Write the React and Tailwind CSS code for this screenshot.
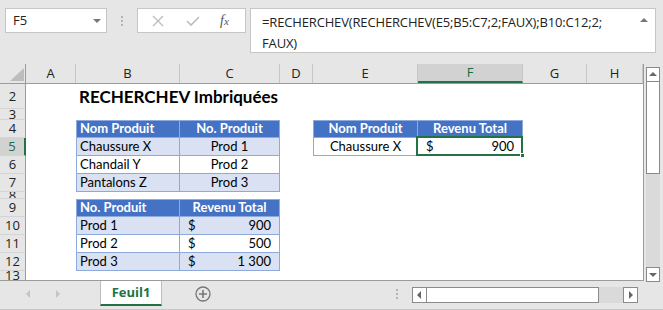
import React from "react";

const COLS = ["w-[50px]", "w-[104px]", "w-[100px]", "w-[33px]", "w-[105px]", "w-[105px]", "w-[64px]", "w-[56px]"];
const LETTERS = ["A", "B", "C", "D", "E", "F", "G", "H"];

// cell kinds: title, head, band, plain (+ align), cur
const ROWS = [
  { n: 2, h: "h-[25px]", cells: { 1: { k: "title", t: "RECHERCHEV Imbriquées" } } },
  { n: 3, h: "h-[11px]", cells: {} },
  {
    n: 4,
    h: "h-[18px]",
    cells: {
      1: { k: "head", t: "Nom Produit", first: true },
      2: { k: "head", t: "No. Produit", center: true },
      4: { k: "head", t: "Nom Produit", center: true, first: true },
      5: { k: "head", t: "Revenu Total", center: true },
    },
  },
  {
    n: 5,
    h: "h-[18px]",
    sel: true,
    cells: {
      1: { k: "band", t: "Chaussure X", first: true },
      2: { k: "band", t: "Prod 1", center: true },
      4: { k: "plain", t: "Chaussure X", center: true, first: true },
      5: { k: "plain", cur: "900", selected: true },
    },
  },
  {
    n: 6,
    h: "h-[18px]",
    cells: {
      1: { k: "plain", t: "Chandail Y", first: true },
      2: { k: "plain", t: "Prod 2", center: true },
    },
  },
  {
    n: 7,
    h: "h-[18px]",
    cells: {
      1: { k: "band", t: "Pantalons Z", first: true },
      2: { k: "band", t: "Prod 3", center: true },
    },
  },
  { n: 8, h: "h-[7px]", cells: {} },
  {
    n: 9,
    h: "h-[18px]",
    cells: {
      1: { k: "head", t: "No. Produit", first: true },
      2: { k: "head", t: "Revenu Total", center: true },
    },
  },
  {
    n: 10,
    h: "h-[18px]",
    cells: {
      1: { k: "band", t: "Prod 1", first: true },
      2: { k: "band", cur: "900" },
    },
  },
  {
    n: 11,
    h: "h-[18px]",
    cells: {
      1: { k: "plain", t: "Prod 2", first: true },
      2: { k: "plain", cur: "500" },
    },
  },
  {
    n: 12,
    h: "h-[18px]",
    cells: {
      1: { k: "band", t: "Prod 3", first: true },
      2: { k: "band", cur: "1 300" },
    },
  },
  { n: 13, h: "h-[10px]", cells: {} },
];

function Cell({ w, c }) {
  if (!c) return <div className={`${w} shrink-0 h-full`} />;
  if (c.k === "title") {
    return (
      <div className={`${w} shrink-0 h-full flex items-center pl-[3px] pt-[1px] whitespace-nowrap text-[17px] font-bold text-black`}>
        {c.t}
      </div>
    );
  }
  const bg =
    c.k === "head"
      ? "bg-[#4472c4] text-white font-bold border-t"
      : c.k === "band"
      ? "bg-[#d9e1f2] text-black"
      : "bg-white text-black";
  return (
    <div
      className={`${w} shrink-0 h-full relative flex items-center border-r border-b border-[#8ea9db] ${bg} ${
        c.first ? "border-l" : ""
      } ${c.cur ? "justify-between px-[8px]" : c.center ? "justify-center" : "pl-[3px]"}`}
    >
      {c.cur ? (
        <>
          <span>$</span>
          <span>{c.cur}</span>
        </>
      ) : (
        <span className="whitespace-nowrap">{c.t}</span>
      )}
      {c.selected && (
        <div className="absolute -left-[2px] -top-[2px] -right-[1px] -bottom-[1px] border-2 border-[#217346]">
          <div className="absolute -right-[4px] -bottom-[4px] w-[5px] h-[5px] bg-[#217346] border border-white" />
        </div>
      )}
    </div>
  );
}

function Tri({ dir, className }) {
  const d = {
    up: "M1 6 L5 2 L9 6 Z",
    down: "M1 3 L5 7 L9 3 Z",
    left: "M6 1 L2 5 L6 9 Z",
    right: "M3 1 L7 5 L3 9 Z",
  }[dir];
  return (
    <svg width="10" height="10" viewBox="0 0 10 10" className={className}>
      <path d={d} fill="currentColor" />
    </svg>
  );
}

function Dots({ className }) {
  return (
    <div className={`flex flex-col gap-[2px] ${className}`}>
      <div className="w-[2px] h-[2px] bg-[#b4b4b4]" />
      <div className="w-[2px] h-[2px] bg-[#b4b4b4]" />
      <div className="w-[2px] h-[2px] bg-[#b4b4b4]" />
    </div>
  );
}

function FormulaBar() {
  return (
    <div className="h-[64px] shrink-0 flex items-start pt-[8px] pl-[5px] font-['Open_Sans',sans-serif] text-[#222]">
      <div className="w-[102px] h-[25px] bg-white border border-[#c6c6c6] flex items-center justify-between pl-[7px] pr-[4px] text-[13px]">
        <span>F5</span>
        <Tri dir="down" className="text-[#777]" />
      </div>
      <div className="w-[30px] h-[25px] flex items-center justify-center">
        <Dots />
      </div>
      <div className="w-[109px] h-[25px] bg-white border border-[#c6c6c6] flex items-center text-[#bdbdbd]">
        <svg width="12" height="12" viewBox="0 0 12 12" className="ml-[14px]">
          <path d="M1 1 L11 11 M11 1 L1 11" stroke="currentColor" strokeWidth="1.4" />
        </svg>
        <svg width="14" height="12" viewBox="0 0 14 12" className="ml-[22px]">
          <path d="M1 6 L5 10 L13 2" stroke="currentColor" strokeWidth="1.6" fill="none" />
        </svg>
        <span className="ml-[20px] text-[14px] italic font-['Liberation_Serif',serif] text-[#555] leading-none">
          f<span className="text-[11px]">x</span>
        </span>
      </div>
      <div className="ml-[4px] w-[406px] h-[45px] bg-white border border-[#c6c6c6] flex justify-between pl-[11px] pr-[6px] pt-[3px]">
        <div className="text-[13px] leading-[21px] whitespace-nowrap tracking-[-0.15px]">
          =RECHERCHEV(RECHERCHEV(E5;B5:C7;2;FAUX);B10:C12;2;
          <br />
          FAUX)
        </div>
        <Tri dir="up" className="text-[#777] mt-[4px]" />
      </div>
    </div>
  );
}

function VScroll() {
  return (
    <div className="w-[14px] ml-[2px] mt-[3px] h-[215px] flex flex-col">
      <div className="h-[15px] bg-white border border-[#8a8a8a] flex items-center justify-center text-[#666]">
        <Tri dir="up" />
      </div>
      <div className="h-[92px] bg-white border-x border-b border-[#8a8a8a]" />
      <div className="flex-1 bg-[#dadada]" />
      <div className="h-[15px] bg-white border border-[#8a8a8a] flex items-center justify-center text-[#666]">
        <Tri dir="down" />
      </div>
    </div>
  );
}

function TabBar() {
  return (
    <div className="h-[29px] shrink-0 flex items-start border-b border-[#c6c6c6] font-['Open_Sans',sans-serif]">
      <div className="w-[100px] h-[26px] flex items-center text-[#c4c4c4]">
        <Tri dir="left" className="ml-[24px]" />
        <Tri dir="right" className="ml-[19px]" />
      </div>
      <div className="w-[62px] h-[25px] bg-white border-x border-[#bdbdbd] border-b-2 border-b-[#217346] flex items-center justify-center text-[13px] font-bold text-[#217346]">
        Feuil1
      </div>
      <div className="w-[82px] h-[26px] flex items-center justify-center text-[#777]">
        <svg width="16" height="16" viewBox="0 0 16 16">
          <circle cx="8" cy="8" r="7" stroke="currentColor" strokeWidth="1.3" fill="none" />
          <path d="M8 4 V12 M4 8 H12" stroke="currentColor" strokeWidth="1.6" />
        </svg>
      </div>
      <div className="w-[168px] h-[26px] flex items-center justify-end pr-[14px]">
        <Dots />
      </div>
      <div className="mt-[6px] h-[16px] w-[226px] flex">
        <div className="w-[15px] h-full bg-white border border-[#8a8a8a] flex items-center justify-center text-[#666]">
          <Tri dir="left" />
        </div>
        <div className="w-[172px] h-full bg-white border-y border-r border-[#8a8a8a]" />
        <div className="flex-1 bg-[#dadada]" />
        <div className="w-[15px] h-full bg-white border border-[#8a8a8a] flex items-center justify-center text-[#666]">
          <Tri dir="right" />
        </div>
      </div>
    </div>
  );
}

export default function App() {
  return (
    <div className="w-[663px] h-[310px] bg-[#e6e6e6] flex flex-col overflow-hidden">
      <FormulaBar />
      <div className="h-[217px] flex shrink-0">
        <div className="w-[644px] flex flex-col border-r border-b border-[#9b9b9b] bg-white overflow-hidden">
          <div className="h-[20px] shrink-0 flex bg-[#e6e6e6] border-b border-[#9b9b9b] font-['Open_Sans',sans-serif] text-[13px] text-[#222]">
            <div className="w-[26px] shrink-0 border-r border-[#9b9b9b] flex items-end justify-end pr-[1px] pb-[2px]">
              <svg width="14" height="13" viewBox="0 0 14 13">
                <path d="M14 0 L14 13 L0 13 Z" fill="#bdbdbd" />
              </svg>
            </div>
            {LETTERS.map((l, i) => (
              <div
                key={l}
                className={`${COLS[i]} shrink-0 flex items-center justify-center border-r ${
                  l === "F"
                    ? "bg-[#d2d2d2] text-[#1e6b40] border-b-2 border-b-[#217346] border-r-[#c6c6c6]"
                    : "border-[#c6c6c6]"
                }`}
              >
                {l}
              </div>
            ))}
          </div>
          {ROWS.map((r) => (
            <div key={r.n} className={`${r.h} shrink-0 flex`}>
              <div
                className={`w-[26px] shrink-0 flex items-center justify-center overflow-hidden border-b border-[#d4d4d4] font-['Open_Sans',sans-serif] text-[13px] leading-none ${
                  r.sel
                    ? "bg-[#d2d2d2] text-[#1e6b40] border-r-2 border-r-[#217346]"
                    : "bg-[#e6e6e6] text-[#222] border-r border-r-[#9b9b9b]"
                }`}
              >
                {r.n}
              </div>
              <div className="flex font-['Lato',sans-serif] text-[13px]">
                {COLS.map((w, i) => (
                  <Cell key={i} w={w} c={r.cells[i]} />
                ))}
              </div>
            </div>
          ))}
        </div>
        <VScroll />
      </div>
      <TabBar />
    </div>
  );
}
